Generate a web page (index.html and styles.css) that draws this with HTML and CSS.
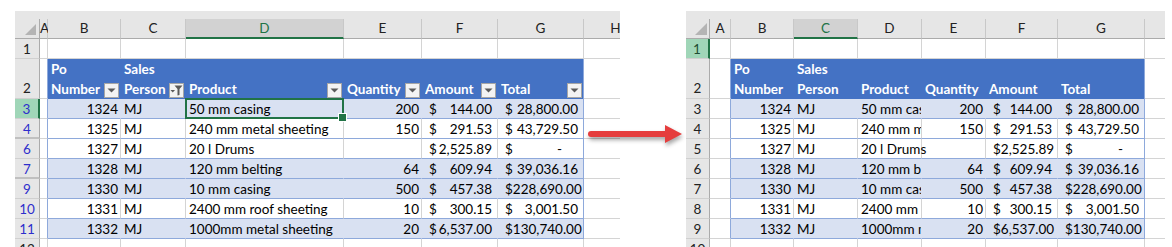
FILE: index.html
```html
<!DOCTYPE html>
<html lang="en">
<head>
<meta charset="utf-8">
<title>Filtered table copy</title>
<link rel="stylesheet" href="styles.css">
</head>
<body>
<div class="page">
  <!-- LEFT SHEET -->
  <div class="sheet sheet-l">
    <div class="strip"></div>
    <div class="grid grid-l">
      <div class="corner"><svg width="24" height="19" viewBox="0 0 24 19"><polygon points="10,16 21,16 21,5" fill="#b4b4b4"/></svg></div>
      <div class="ch">A</div><div class="ch">B</div><div class="ch">C</div><div class="ch sel">D</div><div class="ch">E</div><div class="ch">F</div><div class="ch">G</div><div class="ch">H</div>

      <div class="rh">1</div><div></div><div></div><div></div><div></div><div></div><div></div><div></div><div></div>

      <div class="rh bot">2</div><div class="ea"></div>
      <div class="th"><span class="tt">Po<br>Number</span><span class="fb"><svg width="9" height="5" viewBox="0 0 9 5"><polygon points="0.5,0.5 8.5,0.5 4.5,4.5" fill="#5a5a5a"/></svg></span></div>
      <div class="th"><span class="tt">Sales<br>Person</span><span class="fb"><svg width="13" height="11" viewBox="0 0 13 11"><polygon points="0.5,5 5,5 2.75,7.5" fill="#5a5a5a"/><polygon points="4.5,0.5 12.5,0.5 9.5,4 9.5,10 7.5,10.5 7.5,4" fill="#5a5a5a"/></svg></span></div>
      <div class="th"><span class="tt">Product</span><span class="fb"><svg width="9" height="5" viewBox="0 0 9 5"><polygon points="0.5,0.5 8.5,0.5 4.5,4.5" fill="#5a5a5a"/></svg></span></div>
      <div class="th"><span class="tt">Quantity</span><span class="fb"><svg width="9" height="5" viewBox="0 0 9 5"><polygon points="0.5,0.5 8.5,0.5 4.5,4.5" fill="#5a5a5a"/></svg></span></div>
      <div class="th"><span class="tt">Amount</span><span class="fb"><svg width="9" height="5" viewBox="0 0 9 5"><polygon points="0.5,0.5 8.5,0.5 4.5,4.5" fill="#5a5a5a"/></svg></span></div>
      <div class="th eg"><span class="tt">Total</span><span class="fb"><svg width="9" height="5" viewBox="0 0 9 5"><polygon points="0.5,0.5 8.5,0.5 4.5,4.5" fill="#5a5a5a"/></svg></span></div>
      <div></div>

      <div class="rh f act-row">3</div><div class="ea"></div>
      <div class="td b r">1324</div><div class="td b">MJ</div><div class="td b act">50 mm casing</div><div class="td b r">200</div>
      <div class="td b acc"><span>$</span><span>144.00</span></div><div class="td b acc eg"><span>$</span><span>28,800.00</span></div><div></div>

      <div class="rh f hid">4</div><div class="ea"></div>
      <div class="td r">1325</div><div class="td">MJ</div><div class="td">240 mm metal sheeting</div><div class="td r">150</div>
      <div class="td acc"><span>$</span><span>291.53</span></div><div class="td acc eg"><span>$</span><span>43,729.50</span></div><div></div>

      <div class="rh f">6</div><div class="ea"></div>
      <div class="td r">1327</div><div class="td">MJ</div><div class="td">20 l Drums</div><div class="td r"></div>
      <div class="td acc"><span>$</span><span>2,525.89</span></div><div class="td acc eg"><span>$</span><span class="dash">-</span></div><div></div>

      <div class="rh f hid">7</div><div class="ea"></div>
      <div class="td b r">1328</div><div class="td b">MJ</div><div class="td b">120 mm belting</div><div class="td b r">64</div>
      <div class="td b acc"><span>$</span><span>609.94</span></div><div class="td b acc eg"><span>$</span><span>39,036.16</span></div><div></div>

      <div class="rh f">9</div><div class="ea"></div>
      <div class="td b r">1330</div><div class="td b">MJ</div><div class="td b">10 mm casing</div><div class="td b r">500</div>
      <div class="td b acc"><span>$</span><span>457.38</span></div><div class="td b acc eg"><span>$</span><span>228,690.00</span></div><div></div>

      <div class="rh f">10</div><div class="ea"></div>
      <div class="td r">1331</div><div class="td">MJ</div><div class="td">2400 mm roof sheeting</div><div class="td r">10</div>
      <div class="td acc"><span>$</span><span>300.15</span></div><div class="td acc eg"><span>$</span><span>3,001.50</span></div><div></div>

      <div class="rh f">11</div><div class="ea"></div>
      <div class="td b r">1332</div><div class="td b">MJ</div><div class="td b">1000mm metal sheeting</div><div class="td b r">20</div>
      <div class="td b acc"><span>$</span><span>6,537.00</span></div><div class="td b acc eg"><span>$</span><span>130,740.00</span></div><div></div>

      <div class="rh">12</div><div></div><div></div><div></div><div></div><div></div><div></div><div></div><div></div>
    </div>
  </div>

  <!-- RIGHT SHEET -->
  <div class="sheet sheet-r">
    <div class="strip"></div>
    <div class="grid grid-r">
      <div class="corner"><svg width="23" height="19" viewBox="0 0 23 19"><polygon points="9,16 21,16 21,4" fill="#b4b4b4"/></svg></div>
      <div class="ch">A</div><div class="ch">B</div><div class="ch sel">C</div><div class="ch">D</div><div class="ch">E</div><div class="ch">F</div><div class="ch">G</div><div class="ch"></div>

      <div class="rh act-row n">1</div><div></div><div></div><div></div><div></div><div></div><div></div><div></div><div></div>

      <div class="rh bot">2</div><div class="ea"></div>
      <div class="th"><span class="tt">Po<br>Number</span></div>
      <div class="th"><span class="tt">Sales<br>Person</span></div>
      <div class="th"><span class="tt">Product</span></div>
      <div class="th"><span class="tt">Quantity</span></div>
      <div class="th"><span class="tt">Amount</span></div>
      <div class="th eg"><span class="tt">Total</span></div>
      <div></div>

      <div class="rh">3</div><div class="ea"></div>
      <div class="td b r">1324</div><div class="td b">MJ</div><div class="td b">50 mm casing</div><div class="td b r">200</div>
      <div class="td b acc"><span>$</span><span>144.00</span></div><div class="td b acc eg"><span>$</span><span>28,800.00</span></div><div></div>

      <div class="rh">4</div><div class="ea"></div>
      <div class="td r">1325</div><div class="td">MJ</div><div class="td">240 mm metal sheeting</div><div class="td r">150</div>
      <div class="td acc"><span>$</span><span>291.53</span></div><div class="td acc eg"><span>$</span><span>43,729.50</span></div><div></div>

      <div class="rh">5</div><div class="ea"></div>
      <div class="td r">1327</div><div class="td">MJ</div><div class="td spill">20 l Drums</div><div class="td r"></div>
      <div class="td acc"><span>$</span><span>2,525.89</span></div><div class="td acc eg"><span>$</span><span class="dash">-</span></div><div></div>

      <div class="rh">6</div><div class="ea"></div>
      <div class="td b r">1328</div><div class="td b">MJ</div><div class="td b">120 mm belting</div><div class="td b r">64</div>
      <div class="td b acc"><span>$</span><span>609.94</span></div><div class="td b acc eg"><span>$</span><span>39,036.16</span></div><div></div>

      <div class="rh">7</div><div class="ea"></div>
      <div class="td b r">1330</div><div class="td b">MJ</div><div class="td b">10 mm casing</div><div class="td b r">500</div>
      <div class="td b acc"><span>$</span><span>457.38</span></div><div class="td b acc eg"><span>$</span><span>228,690.00</span></div><div></div>

      <div class="rh">8</div><div class="ea"></div>
      <div class="td r">1331</div><div class="td">MJ</div><div class="td">2400 mm roof sheeting</div><div class="td r">10</div>
      <div class="td acc"><span>$</span><span>300.15</span></div><div class="td acc eg"><span>$</span><span>3,001.50</span></div><div></div>

      <div class="rh">9</div><div class="ea"></div>
      <div class="td b r">1332</div><div class="td b">MJ</div><div class="td b">1000mm metal sheeting</div><div class="td b r">20</div>
      <div class="td b acc"><span>$</span><span>6,537.00</span></div><div class="td b acc eg"><span>$</span><span>130,740.00</span></div><div></div>

      <div class="rh">10</div><div></div><div></div><div></div><div></div><div></div><div></div><div></div><div></div>
    </div>
  </div>

  <svg class="arrow" width="100" height="28" viewBox="0 0 100 28">
    <rect x="1" y="7" width="82" height="6" rx="3" fill="#e53d3d"/>
    <polygon points="78,1 95,10 78,19" fill="#e53d3d"/>
  </svg>
</div>
</body>
</html>
```

FILE: styles.css
```css
* { box-sizing: border-box; }
html, body { margin: 0; padding: 0; background: #fff; }
body {
  font-family: Lato, "Liberation Sans", sans-serif;
  font-size: 13.5px;
  color: #000;
  overflow: hidden;
}
.page {
  position: relative;
  display: flex;
  align-items: flex-start;
  gap: 66px;
  padding: 11px 0 0 15px;
  width: 1172px;
  height: 247px;
  overflow: hidden;
}
.sheet { flex: none; height: 236px; overflow: hidden; display: flex; flex-direction: column; }
.sheet-l { width: 605px; }
.sheet-r { width: 479px; }
.strip { height: 8px; background: #e6e6e6; flex: none; }

.grid {
  display: grid;
  grid-template-rows: 20px 20px 40px repeat(8, 20px);
}
.grid-l { grid-template-columns: 25px 8px 73px 65px 158px 78px 76px 86px 64px; }
.grid-r { grid-template-columns: 24px 21px 63px 64px 64px 64px 72px 87px 64px; }

.grid > div {
  border-right: 1px solid #d4d4d4;
  border-bottom: 1px solid #d4d4d4;
  white-space: nowrap;
  overflow: hidden;
  line-height: 19px;
  padding-top: 1px;
  min-width: 0;
}

/* column headers */
.grid > .corner { background: #e6e6e6; border-right-color: #ababab; border-bottom-color: #ababab; padding: 0; }
.corner svg { display: block; }
.grid > .ch {
  background: #e6e6e6;
  border-right-color: #c8c8c8;
  border-bottom-color: #ababab;
  text-align: center;
  color: #222;
  overflow: visible;
  padding-top: 0;
}
.grid > .ch.sel { background: #d2d2d2; border-bottom: 2px solid #217346; color: #217346; }

/* row headers */
.grid > .rh {
  background: #e6e6e6;
  border-right-color: #ababab;
  border-bottom-color: #d0d0d0;
  text-align: center;
  color: #222;
}
.grid > .rh.bot { display: flex; align-items: flex-end; justify-content: center; padding-bottom: 0; }
.grid > .rh.f { color: #2e2ecc; }
.grid > .rh.hid { border-bottom: 2px solid #c0c0c0; }
.grid > .rh.act-row { background: #a0d6b8; border-right: 2px solid #217346; }
.grid > .rh.n { color: #1f4d33; }

/* table */
.grid > .ea { border-right-color: #8ea9db; }
.grid > .th {
  background: #4472c4;
  border-right-color: #4472c4;
  border-bottom: 0;
  color: #fff;
  font-weight: 700;
  display: flex;
  align-items: flex-end;
  padding: 0 0 0 3px;
  line-height: 20px;
}
.grid > .th.eg { border-right-color: #8ea9db; }
.tt { flex: 1; min-width: 0; overflow: hidden; }
.fb {
  flex: none;
  width: 15px;
  height: 15px;
  margin: 0 1px 1px 0;
  background: #f3f3f3;
  border: 1px solid #a6a6a6;
  display: flex;
  align-items: center;
  justify-content: center;
}
.fb svg { display: block; }

.grid > .td { border-bottom-color: #8ea9db; padding-left: 3px; padding-right: 2px; }
.grid > .td.b { background: #d9e1f2; border-right-color: #d9e1f2; }
.grid > .td.eg { border-right-color: #8ea9db; }
.grid > .td.r { text-align: right; }
.grid > .td.acc { display: flex; justify-content: space-between; padding-left: 7px; padding-right: 5px; }
.grid > .td.spill { overflow: visible; }
.dash { padding-right: 16px; }

.grid > .td.act { position: relative; overflow: visible; }
.act::after {
  content: "";
  position: absolute;
  left: -1px; top: -1px; right: -1px; bottom: -1px;
  border: 2px solid #217346;
}
.act::before {
  content: "";
  position: absolute;
  right: -4px; bottom: -4px;
  width: 7px; height: 7px;
  background: #217346;
  border: 1px solid #fff;
  z-index: 1;
}

.arrow {
  position: absolute;
  left: 587px;
  top: 124px;
  overflow: visible;
  filter: drop-shadow(1px 3px 2px rgba(0,0,0,0.35));
}
```
